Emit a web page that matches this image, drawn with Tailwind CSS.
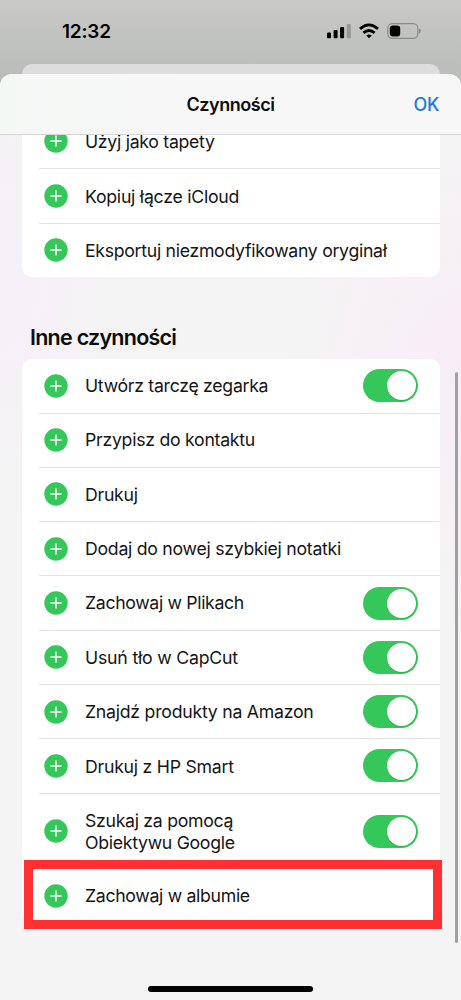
<!DOCTYPE html>
<html lang="pl">
<head>
<meta charset="utf-8">
<meta name="viewport" content="width=device-width">
<title>Czynności</title>
<script src="https://cdn.jsdelivr.net/npm/@tailwindcss/browser@4"></script>
</head>
<body class="relative flex h-[1000px] w-[461px] flex-col overflow-hidden bg-gradient-to-b from-[#c9c9c7] from-0% to-[#b9bcb8] to-[8%] font-['Inter','Liberation_Sans',sans-serif] text-[17.7px] text-[#151515]">
<svg class="hidden">
  <symbol id="plus" viewBox="0 0 24 24"><circle cx="12" cy="12" r="11.7" fill="#35c759"/><path d="M12 6.9v10.2M6.9 12h10.2" stroke="#fff" stroke-width="1.5" stroke-linecap="round"/></symbol>
  <symbol id="switch" viewBox="0 0 55 33"><rect width="55" height="33" rx="16.5" fill="#35c759"/><circle cx="38.5" cy="17" r="15" fill="#1c9f3e" opacity=".45"/><circle cx="38.5" cy="16.5" r="14.5" fill="#fff"/></symbol>
</svg>

<header class="flex h-16 shrink-0 items-start justify-between pr-[40px] pl-[62px]">
  <time class="mt-[18px] text-[19px] leading-[27px] font-semibold tracking-[-0.2px] text-black">12:32</time>
  <svg class="mt-[22px] h-[18px] w-[94px]" viewBox="327 22 94 18">
    <rect x="327" y="32.4" width="4" height="5.8" rx="1"/><rect x="333.6" y="30" width="4" height="8.2" rx="1"/><rect x="340.1" y="27" width="4" height="11.2" rx="1"/><rect x="346.8" y="24" width="4" height="14.2" rx="1" opacity=".22"/>
    <g fill="none" stroke="#000" stroke-width="2.8"><path d="M360 28.9Q369 20.8 378 28.9"/><path d="M363.5 32.9Q369 28 374.5 32.9"/></g><path d="M366.2 35.6Q369 33.2 371.8 35.6L369 38.3Z"/>
    <rect x="387.8" y="23.6" width="30" height="14.8" rx="4.6" fill="none" stroke="#8a8c89" stroke-width="1.2"/><rect x="389.8" y="25.6" width="10.4" height="10.8" rx="3"/><path d="M419 28.6q1.8.6 1.8 2.4t-1.8 2.4z" fill="#858784"/>
  </svg>
</header>
<div class="mr-[21px] ml-[22px] h-[10px] shrink-0 rounded-t-[10px] bg-[#dcdcdc]"></div>

<main class="relative flex grow flex-col rounded-t-[12px] bg-[#f4f4f4] bg-[radial-gradient(ellipse_180px_260px_at_461px_300px,#f8edf7,transparent),radial-gradient(ellipse_130px_240px_at_0px_200px,#f6f0f8,transparent)]">
  <div class="grid h-[61px] shrink-0 grid-cols-3 items-center rounded-t-[12px] border-b border-[#d6d6d6] bg-gradient-to-r from-[#f4f8f5] to-[#f7f7f7] to-40% pr-[22px]">
    <span></span>
    <h1 class="pl-[22px] text-center text-[18px] font-semibold tracking-[-0.45px] text-[#0c0c0c]">Czynności</h1>
    <button class="text-right text-[18px] font-medium tracking-[-0.3px] text-[#1a7be0]">OK</button>
  </div>

  <ul class="mr-[21px] ml-[22px] flex h-[142px] shrink-0 flex-col justify-end overflow-hidden rounded-b-[10px] bg-white">
    <li class="flex h-[54.3px] shrink-0 items-center pl-[22px]"><svg class="size-6"><use href="#plus"/></svg><span class="pt-[2px] pl-[17px] tracking-[-0.29px]">Użyj jako tapety</span></li>
    <li class="ml-[17px] flex h-[54.3px] shrink-0 items-center border-t border-[#e4e4e4] pl-[5px]"><svg class="size-6"><use href="#plus"/></svg><span class="pt-[2px] pl-[17px] tracking-[-0.25px]">Kopiuj łącze iCloud</span></li>
    <li class="ml-[17px] flex h-[54.3px] shrink-0 items-center border-t border-[#e4e4e4] pl-[5px]"><svg class="size-6"><use href="#plus"/></svg><span class="pt-[2px] pl-[17px] tracking-[-0.3px]">Eksportuj niezmodyfikowany oryginał</span></li>
  </ul>

  <h2 class="mt-[44.5px] mb-[7px] ml-[30px] h-[30px] shrink-0 text-[21.5px] leading-[30px] font-semibold tracking-[-0.75px] text-[#0c0c0c]">Inne czynności</h2>

  <ul class="mr-[21px] ml-[22px] flex shrink-0 flex-col rounded-[10px] bg-white">
    <li class="ml-[17px] flex h-[54px] items-center pl-[5px]"><svg class="size-6"><use href="#plus"/></svg><span class="grow pt-px pl-[17px] tracking-[-0.29px]">Utwórz tarczę zegarka</span><svg class="mr-[22px] h-[33px] w-[55px]"><use href="#switch"/></svg></li>
    <li class="ml-[17px] flex h-[54.3px] items-center border-t border-[#e4e4e4] pl-[5px]"><svg class="size-6"><use href="#plus"/></svg><span class="pt-px pl-[17px] tracking-[-0.27px]">Przypisz do kontaktu</span></li>
    <li class="ml-[17px] flex h-[54.3px] items-center border-t border-[#e4e4e4] pl-[5px]"><svg class="size-6"><use href="#plus"/></svg><span class="pt-px pl-[17px] tracking-[-0.27px]">Drukuj</span></li>
    <li class="ml-[17px] flex h-[54.3px] items-center border-t border-[#e4e4e4] pl-[5px]"><svg class="size-6"><use href="#plus"/></svg><span class="pt-px pl-[17px] tracking-[-0.27px]">Dodaj do nowej szybkiej notatki</span></li>
    <li class="ml-[17px] flex h-[54.3px] items-center border-t border-[#e4e4e4] pl-[5px]"><svg class="size-6"><use href="#plus"/></svg><span class="grow pt-px pl-[17px] tracking-[-0.34px]">Zachowaj w Plikach</span><svg class="mr-[22px] h-[33px] w-[55px]"><use href="#switch"/></svg></li>
    <li class="ml-[17px] flex h-[54.3px] items-center border-t border-[#e4e4e4] pl-[5px]"><svg class="size-6"><use href="#plus"/></svg><span class="grow pt-px pl-[17px] tracking-[-0.2px]">Usuń tło w CapCut</span><svg class="mr-[22px] h-[33px] w-[55px]"><use href="#switch"/></svg></li>
    <li class="ml-[17px] flex h-[54.3px] items-center border-t border-[#e4e4e4] pl-[5px]"><svg class="size-6"><use href="#plus"/></svg><span class="grow pt-px pl-[17px] tracking-[-0.25px]">Znajdź produkty na Amazon</span><svg class="mr-[22px] h-[33px] w-[55px]"><use href="#switch"/></svg></li>
    <li class="ml-[17px] flex h-[54.3px] items-center border-t border-[#e4e4e4] pl-[5px]"><svg class="size-6"><use href="#plus"/></svg><span class="grow pt-[2px] pl-[17px] tracking-[-0.25px]">Drukuj z HP Smart</span><svg class="mr-[22px] h-[33px] w-[55px]"><use href="#switch"/></svg></li>
    <li class="ml-[17px] flex h-[76px] items-center border-t border-[#e4e4e4] pl-[5px]"><svg class="size-6"><use href="#plus"/></svg><span class="grow pt-px pl-[17px] leading-[22px] tracking-[-0.3px]">Szukaj za pomocą<br>Obiektywu Google</span><svg class="mr-[22px] h-[33px] w-[55px]"><use href="#switch"/></svg></li>
    <li class="ml-[17px] flex h-[54.3px] items-center pl-[5px]"><svg class="size-6"><use href="#plus"/></svg><span class="pt-[2px] pl-[17px] tracking-[-0.32px]">Zachowaj w albumie</span></li>
  </ul>
</main>

<div class="absolute top-[860px] left-[24px] h-[69px] w-[417.5px] border-[9.5px] border-[#fd3032]"></div>
<div class="absolute top-[372px] left-[455px] h-[571px] w-[3px] rounded-full bg-[#a09fa1]"></div>
<div class="absolute top-[986px] left-[148px] h-[5.5px] w-[165px] rounded-full bg-black"></div>
</body>
</html>
